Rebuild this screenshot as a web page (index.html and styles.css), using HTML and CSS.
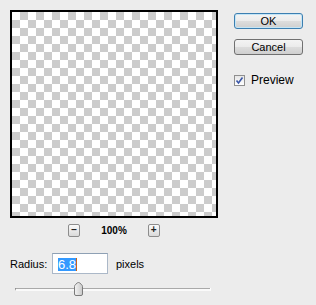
FILE: index.html
```html
<!DOCTYPE html>
<html lang="en">
<head>
  <meta charset="UTF-8" />
  <title>Gaussian Blur</title>
  <link rel="stylesheet" href="styles.css">
</head>
<body>

<div class="dialog">

  <div class="top">
    <!-- Preview area + zoom -->
    <div class="left">
      <div class="preview"></div>
      <div class="zoom-row">
        <div class="zbtn">&minus;</div>
        <div class="zoom-val">100%</div>
        <div class="zbtn">+</div>
      </div>
    </div>

    <!-- Buttons -->
    <div class="right">
      <div class="btn btn-default">OK</div>
      <div class="btn">Cancel</div>
      <label class="check-row">
        <span class="checkbox">
          <svg width="9" height="9" viewBox="0 0 9 9">
            <path d="M1.5 4.5 L3.5 7 L7.5 1.5" fill="none" stroke="#3a57a8" stroke-width="1.6"/>
          </svg>
        </span>
        Preview
      </label>
    </div>
  </div>

  <div class="radius-row">
    <span class="label">Radius:</span>
    <div class="input"><span class="sel">6.8</span></div>
    <span class="unit">pixels</span>
  </div>

  <div class="slider">
    <div class="track"></div>
    <svg class="thumb" style="left: 59px" width="9" height="14" viewBox="0 0 9 14">
      <defs>
        <linearGradient id="tg" x1="0" y1="0" x2="1" y2="0">
          <stop offset="0" stop-color="#f4f4f4"/>
          <stop offset="1" stop-color="#c9c9c9"/>
        </linearGradient>
      </defs>
      <path d="M0.5 12 V4.5 Q0.5 3.5 1.5 2.5 L3.5 0.8 Q4.5 0.2 5.5 0.8 L7.5 2.5 Q8.5 3.5 8.5 4.5 V12 Q8.5 13.5 7 13.5 H2 Q0.5 13.5 0.5 12 Z" fill="url(#tg)" stroke="#7a7a7a"/>
    </svg>
  </div>

</div>

</body>
</html>
```

FILE: styles.css
```css
body {
  margin: 0;
  background: #ececec;
  font-family: 'Liberation Sans', Arial, sans-serif;
  font-size: 11px;
  color: #000;
}
.dialog {
  width: 316px;
  height: 305px;
  padding: 10px 0 0 10px;
  box-sizing: border-box;
}
.top {
  display: flex;
}
.left {
  width: 208px;
}
.preview {
  width: 208px;
  height: 208px;
  border: 2px solid #000;
  box-sizing: border-box;
  background: conic-gradient(#cccccc 25%, #ffffff 0 50%, #cccccc 0 75%, #ffffff 0);
  background-size: 16px 16px;
  background-position: 0 0;
}
.zoom-row {
  display: flex;
  justify-content: center;
  align-items: center;
  gap: 21px;
  margin-top: 6px;
  height: 12px;
}
.zbtn {
  width: 12px;
  height: 13px;
  border: 1px solid #8c8c8c;
  border-radius: 2px;
  background: linear-gradient(#fafafa, #dadada);
  box-sizing: border-box;
  font-size: 10px;
  font-weight: bold;
  line-height: 10px;
  text-align: center;
  color: #222;
}
.zoom-val {
  font-size: 10px;
  font-weight: bold;
}
.right {
  margin-left: 16px;
  padding-top: 3px;
  width: 69px;
}
.btn {
  height: 16px;
  border: 1px solid #707070;
  border-radius: 3px;
  box-sizing: border-box;
  background: linear-gradient(#f4f4f4 0%, #ebebeb 50%, #dddddd 51%, #cfcfcf 100%);
  text-align: center;
  line-height: 14px;
  margin-bottom: 10px;
}
.btn-default {
  border-color: #3c7fb1;
  box-shadow: inset 0 0 0 1px #c4e5f6;
}
.check-row {
  display: flex;
  align-items: center;
  gap: 6px;
  margin-top: 18px;
  font-size: 12px;
}
.checkbox {
  width: 9px;
  height: 9px;
  border: 1px solid #8f8f8f;
  background: linear-gradient(#e6e6e6, #ffffff);
  box-sizing: content-box;
  display: flex;
}
.radius-row {
  display: flex;
  align-items: center;
  margin-top: 17px;
}
.label {
  width: 42px;
}
.input {
  width: 56px;
  height: 21px;
  border: 1px solid #abb8c8;
  border-top-color: #8ea0b4;
  background: #fff;
  box-sizing: border-box;
  padding: 3px 0 0 5px;
  font-size: 13px;
}
.sel {
  display: inline-block;
  background: #3399ff;
  color: #fff;
  line-height: 13px;
  border-right: 1px solid #c8641a;
}
.unit {
  margin-left: 8px;
}
.slider {
  position: relative;
  width: 196px;
  height: 14px;
  margin: 8px 0 0 5px;
}
.track {
  position: absolute;
  left: 0;
  right: 0;
  top: 6px;
  height: 1px;
  background: #a9a9a9;
  border-bottom: 2px solid #fafafa;
  border-left: 1px solid #8f8f8f;
  border-right: 1px solid #fff;
}
.thumb {
  position: absolute;
  top: 0;
}
```
